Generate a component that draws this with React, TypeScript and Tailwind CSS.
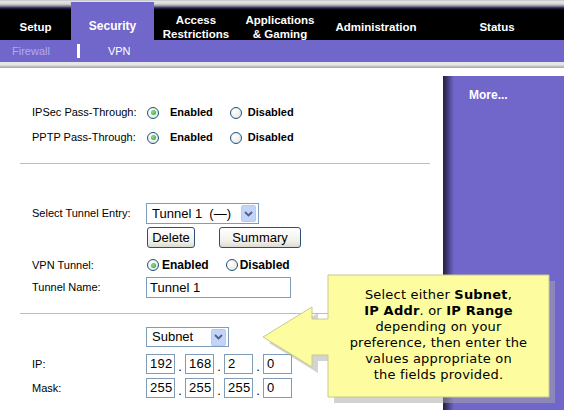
import React from 'react';

const tabs = [
  { label: ['Setup'], w: 'w-[71px]' },
  { label: ['Security'], w: 'w-[83px]', active: true },
  { label: ['Access', 'Restrictions'], w: 'w-[84px]' },
  { label: ['Applications', '& Gaming'], w: 'w-[84px]' },
  { label: ['Administration'], w: 'w-[108px]' },
  { label: ['Status'], w: 'w-[134px]' },
];

function Radio({ checked }: { checked?: boolean }) {
  return (
    <span className="relative flex h-[12px] w-[12px] shrink-0 items-center justify-center rounded-full border border-[#1c5180] bg-[radial-gradient(circle_at_35%_35%,#ffffff,#e4e2d8)]">
      {checked && <span className="h-[5px] w-[5px] rounded-full bg-[radial-gradient(circle_at_40%_40%,#8ce08c,#21a121)]" />}
    </span>
  );
}

function Select({ text, w }: { text: string; w: string }) {
  return (
    <div className={`flex h-[21px] ${w} items-center justify-between border border-[#7f9db9] bg-white pl-[5px] pr-[2px] text-[13px]`}>
      <span className="whitespace-pre">{text}</span>
      <span className="flex h-[17px] w-[15px] items-center justify-center rounded-[2px] border border-[#b8c9f6] bg-[#c3d4fb]">
        <svg width="9" height="6" viewBox="0 0 9 6">
          <path d="M1 1 L4.5 4.5 L8 1" fill="none" stroke="#4d6185" strokeWidth="1.8" />
        </svg>
      </span>
    </div>
  );
}

function Octet({ v }: { v: string }) {
  return (
    <div className="flex h-[20px] w-[29px] items-center border border-[#7f9db9] bg-white pl-[3px] text-[13px] tracking-[0.3px]">{v}</div>
  );
}

function IpRow({ label, values }: { label: string; values: string[] }) {
  return (
    <div className="flex h-[20px] items-center">
      <div className="w-[114px] text-[11px]">{label}</div>
      <div className="flex items-center">
        {values.map((v, i) => (
          <React.Fragment key={i}>
            {i > 0 && <span className="w-[10px] self-end pb-[1px] text-center text-[13px] leading-[13px]">.</span>}
            <Octet v={v} />
          </React.Fragment>
        ))}
      </div>
    </div>
  );
}

export default function App() {
  return (
    <div className="relative h-[410px] w-[564px] overflow-hidden bg-white font-['Liberation_Sans',Arial,sans-serif] text-black">
      {/* Top tabs */}
      <div className="flex h-[40px] items-end bg-[linear-gradient(to_bottom,#b0b0b0_0px,#e6e6e6_1px,#d6d6d6_4px,#8c8c94_6px,#2a1e52_8px,#000_10px,#000_40px)]">
        {tabs.map((t) => (
          <div
            key={t.label.join()}
            className={`${t.w} flex flex-col items-center justify-center text-[11.5px] font-bold leading-[14px] text-white ${
              t.active ? 'h-[38px] bg-[#7166c9] pt-[10px] text-[12px]' : 'h-[30px] pt-[3px]'
            }`}
          >
            {t.label.map((l) => (
              <span key={l}>{l}</span>
            ))}
          </div>
        ))}
      </div>

      {/* Sub nav */}
      <div className="flex h-[22px] items-center bg-[#7166c9] text-[11px]">
        <span className="ml-[12px] text-[#b3acef]">Firewall</span>
        <span className="ml-[27px] h-[14px] w-[3px] bg-white" />
        <span className="ml-[28px] text-white">VPN</span>
      </div>
      <div className="h-[6px] bg-[linear-gradient(to_bottom,#e6e6e6_0px,#e6e6e6_3px,#c4c4c4_4px,#a8a8a8_6px)]" />

      <div className="flex">
        {/* Main content */}
        <div className="w-[443px] pt-[32px]">
          {['IPSec Pass-Through:', 'PPTP Pass-Through:'].map((l) => (
            <div key={l} className="flex h-[25px] items-center pl-[32px] text-[11px]">
              <div className="w-[115px]">{l}</div>
              <Radio checked />
              <span className="ml-[11px] font-bold">Enabled</span>
              <span className="ml-[17px]">
                <Radio />
              </span>
              <span className="ml-[6px] font-bold">Disabled</span>
            </div>
          ))}

          <div className="ml-[20px] mt-[13px] h-px w-[410px] bg-[#bbb6e2]" />

          <div className="mt-[39px] pl-[32px]">
            <div className="flex h-[21px] items-center">
              <div className="w-[114px] text-[11px]">Select Tunnel Entry:</div>
              <Select text="Tunnel 1  (—)" w="w-[113px]" />
            </div>
            <div className="mt-[3px] flex h-[21px] items-center pl-[115px] text-[13px]">
              <button className="h-[21px] w-[48px] rounded-[3px] border border-[#2c4f7a] bg-[linear-gradient(to_bottom,#ffffff,#f1f0ea_70%,#dcdad0)]">Delete</button>
              <button className="ml-[24px] h-[21px] w-[82px] rounded-[3px] border border-[#2c4f7a] bg-[linear-gradient(to_bottom,#ffffff,#f1f0ea_70%,#dcdad0)]">Summary</button>
            </div>
            <div className="mt-[8px] flex h-[18px] items-center text-[11px]">
              <div className="w-[115px]">VPN Tunnel:</div>
              <Radio checked />
              <span className="ml-[3px] text-[12px] font-bold">Enabled</span>
              <span className="ml-[17px]">
                <Radio />
              </span>
              <span className="ml-[2px] text-[12px] font-bold">Disabled</span>
            </div>
            <div className="mt-[3px] flex h-[21px] items-center">
              <div className="w-[114px] text-[11px]">Tunnel Name:</div>
              <div className="flex h-[21px] w-[145px] items-center border border-[#7f9db9] pl-[3px] text-[13px]">Tunnel 1</div>
            </div>
          </div>

          <div className="ml-[20px] mt-[15px] h-px w-[410px] bg-[#bbb6e2]" />

          <div className="mt-[13px] pl-[32px]">
            <div className="flex h-[20px] items-center pl-[114px]">
              <Select text="Subnet" w="w-[83px] !h-[20px]" />
            </div>
            <div className="mt-[7px]">
              <IpRow label="IP:" values={['192', '168', '2', '0']} />
            </div>
            <div className="mt-[4px]">
              <IpRow label="Mask:" values={['255', '255', '255', '0']} />
            </div>
          </div>
        </div>

        {/* Right sidebar */}
        <div className="mt-[8px] h-[340px] flex-1 bg-[linear-gradient(to_right,#24203f_0px,#3c3670_4px,#5c54a8_8px,#7166c9_11px)] pl-[26px] pt-[6px]">
          <span className="text-[12px] font-bold text-white">More...</span>
        </div>
      </div>

      {/* Callout */}
      <svg className="absolute left-0 top-0" width="564" height="410" viewBox="0 0 564 410">
        <path
          d="M328 275 H549 V397 H328 V355 H312 V367 L263 337 L312 307 V319 H328 Z"
          fill="#a8a8a8"
          opacity="0.5"
          transform="translate(6 6)"
        />
        <path
          d="M328 275 H549 V397 H328 V355 H312 V367 L263 337 L312 307 V319 H328 Z"
          fill="#fdfda0"
          stroke="#c8c890"
          strokeWidth="1"
        />
      </svg>
      <div className="absolute left-[328px] top-[287px] w-[221px] text-center font-['DejaVu_Sans',Verdana,sans-serif] text-[13px] leading-[16px] tracking-[0.2px] text-black">
        Select either <b>Subnet</b>,<br />
        <b>IP Addr</b>. or <b>IP Range</b>
        <br />
        depending on your
        <br />
        preference, then enter the
        <br />
        values appropriate on
        <br />
        the fields provided.
      </div>
    </div>
  );
}
